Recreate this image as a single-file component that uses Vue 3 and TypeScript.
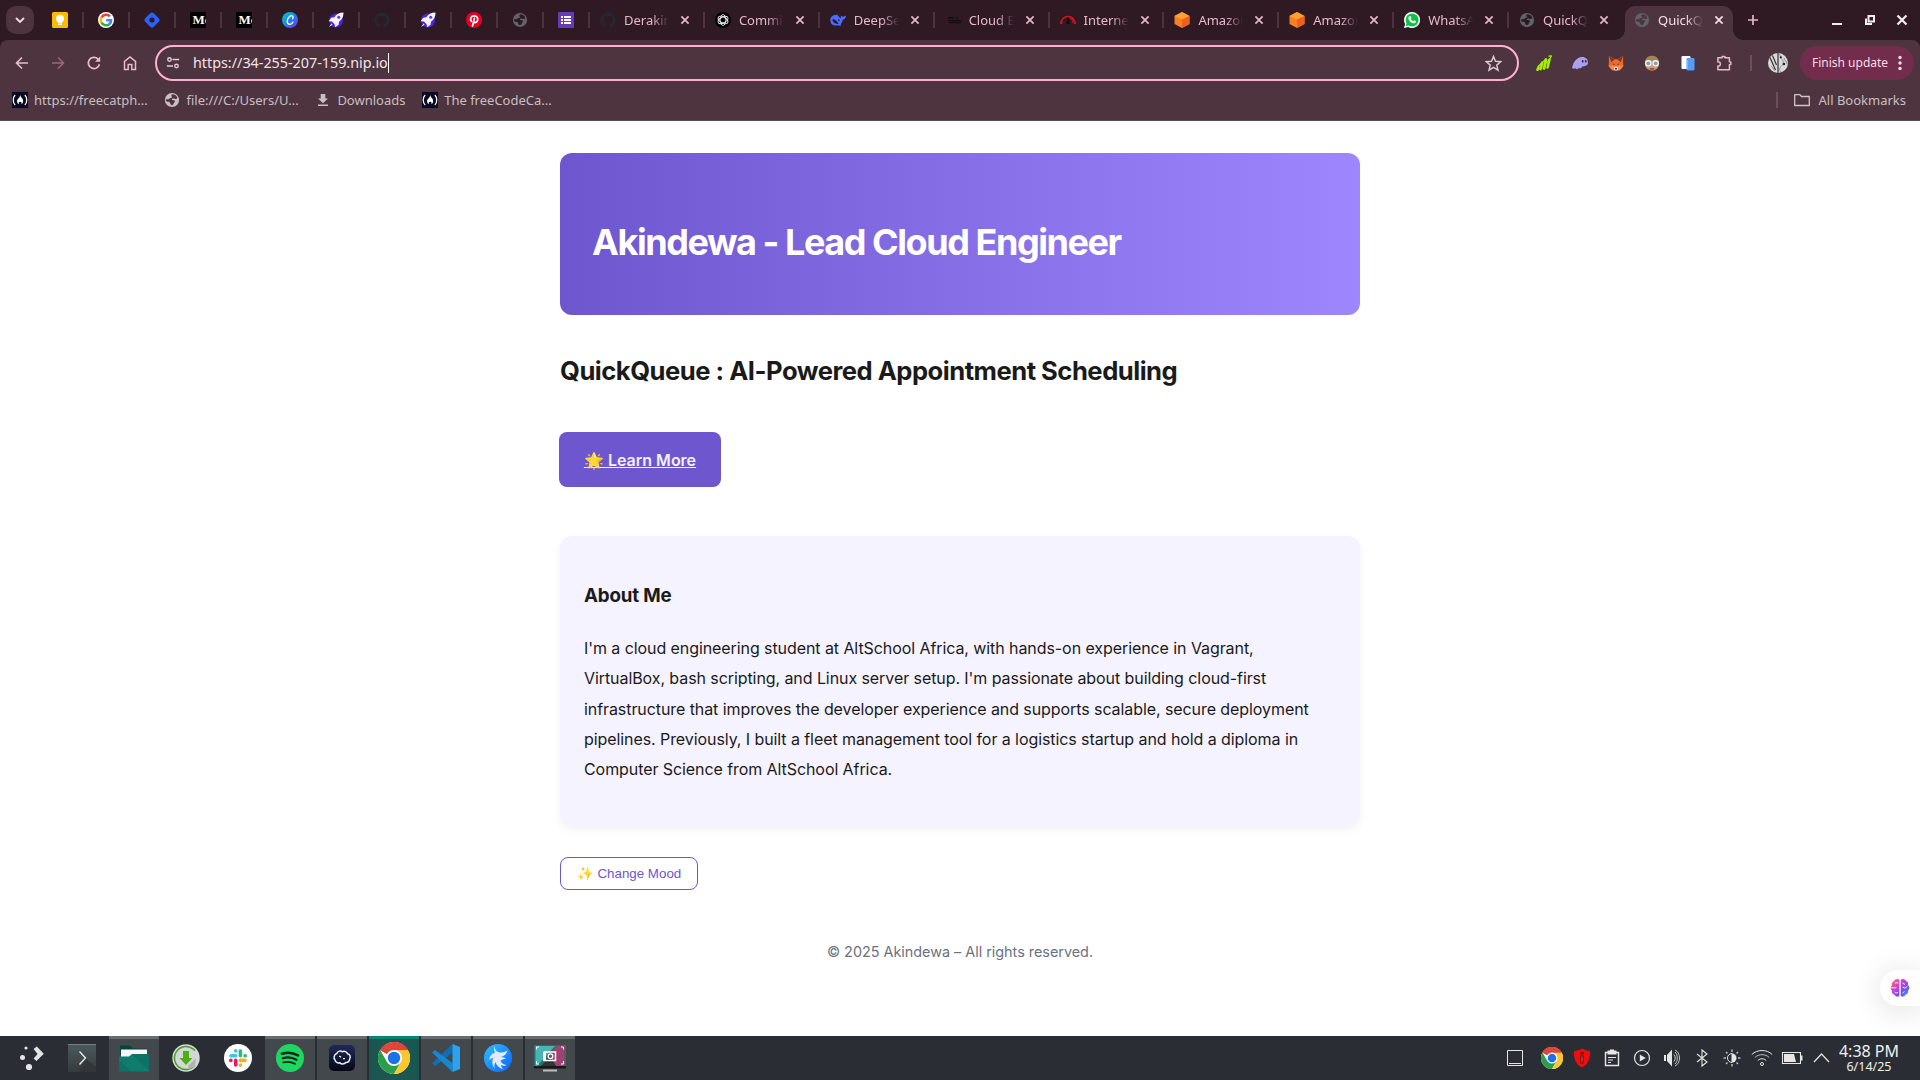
<script setup lang="ts">
interface Tab {
  icon: string
  title: string
}

interface Task {
  icon: string
  name: string
  size: number
  state: '' | 'open' | 'active'
}

const chromeLogo =
  '<circle cx="24" cy="24" r="24" fill="#fff"/><path d="M24 24 3.2 12A24 24 0 0 1 44.8 12z" fill="#db4437"/><path d="M3.2 12A24 24 0 0 0 24 48L34.4 30 24 24 13.6 30z" fill="#2b9e4b"/><path d="M44.8 12H24L34.4 30 24 48A24 24 0 0 0 44.8 12z" fill="#fcc62c"/><path d="M3.2 12A24 24 0 0 1 44.8 12H24A12 12 0 0 0 13.6 18z" fill="#e0443a"/><circle cx="24" cy="24" r="12" fill="#fff"/><circle cx="24" cy="24" r="9.3" fill="#1a73e8"/>'

const globe =
  '<circle cx="8" cy="8" r="7.1" fill="currentColor"/><path d="M8.6 2.2c-1.4.4-1.5 1.4-.9 2.2.6.9-.2 1.6-1.3 1.7-.9.1-.9 1.1-1.8 1.2-.9 0-2.3-.2-2.8.4.1 1.3.9 2 2.2 2.1 1.4 0 2 .5 2.2 1.6.2 1 1 .8 1.1 1.8 1.7-.1 2.4-1 2.5-2 .2-1 1.4-1 1.2-2.2C10.600 7.900 9 7.900 8 7.900c-.4-.9.2-1.300.9-1.400C9.900 6.300 10.900 7 12 6.900c.9-.1 1.500-.9 1-2C12 3.300 10.500 2.300 8.600 2.200z" fill="var(--hole)"/>'

const rocket =
  '<circle cx="8" cy="8.500" r="7" fill="#4b25d8"/><path d="M15.500.5C11 .6 8.300 2.300 6.300 5.300L3.200 5.700.8 9.200l3.100.4 2.700 2.600.5 3 3.500-2.500.4-3C14 7.600 15.600 5 15.500.5z" fill="#f4f3fb"/><circle cx="10.700" cy="5.200" r="1.500" fill="#5a3be0"/><path d="M3.500 11.500 1 15l3.500-2.300z" fill="#e9e6fb"/>'

const github =
  '<path d="M8 .4a7.700 7.700 0 0 0-2.430 15c.38.070.53-.160.53-.360v-1.400c-2.150.460-2.600-.930-2.600-.930-.350-.890-.860-1.130-.860-1.130-.700-.480.050-.470.050-.470.780.060 1.190.800 1.190.800.690 1.190 1.810.840 2.250.640.070-.500.270-.840.490-1.030-1.710-.200-3.500-.860-3.500-3.800 0-.840.300-1.530.790-2.070-.080-.190-.340-.980.080-2.040 0 0 .640-.210 2.110.790a7.300 7.300 0 0 1 3.840 0c1.470-1 2.110-.790 2.110-.790.420 1.060.160 1.850.080 2.040.490.540.790 1.230.790 2.070 0 2.960-1.800 3.600-3.510 3.800.280.240.520.700.520 1.420v2.100c0 .200.140.440.530.360A7.700 7.700 0 0 0 8 .4z" fill="#24292e"/>'

const medium =
  '<rect width="16" height="16" rx="1" fill="#000"/><text x="2.500" y="12" font-family="Liberation Serif, serif" font-weight="700" font-size="13" fill="#fff">Mc</text>'

const cube =
  '<path d="M8 0 15.500 4v8L8 16 .5 12V4z" fill="#f58220"/><path d="M8 0 15.500 4 8 7.600.5 4z" fill="#ffa02f"/><path d="M15.500 4v8L8 16V7.600z" fill="#ee6020"/>'

const fcc =
  '<rect width="16" height="16" fill="#0a0a23"/><path d="M3.200 3C.6 5.300.6 10.700 3.200 13M12.800 3c2.600 2.300 2.600 7.700 0 10" fill="none" stroke="#fff" stroke-width="1.200"/><path d="M8.100 3c.5 2.500 3.100 3.300 3 6.200 0 1.500-.8 2.600-1.900 3.100.6-1.100.5-2-.5-2.900-.7.900-1.300.8-1.400.1-.7.900-.7 1.900 0 2.800-1.500-.6-2.400-1.900-2.200-3.500C5.300 6.800 8 6 8.100 3z" fill="#fff"/>'

const icons: Record<string, string> = {
  keep: '<rect width="16" height="16" rx="1.500" fill="#fbbc04"/><circle cx="8" cy="6.700" r="3.900" fill="#fff"/><path d="M6 9h4v2H6zM6 11.600h4v1.400H6z" fill="#fff"/>',
  google:
    '<circle cx="8" cy="8" r="8" fill="#fff"/><g fill="none" stroke-width="2.500"><path d="M11.900 4.300A5.200 5.200 0 0 0 3.500 5.400" stroke="#ea4335"/><path d="M3.500 5.300a5.200 5.200 0 0 0 0 5.400" stroke="#fbbc05"/><path d="M3.500 10.600a5.200 5.200 0 0 0 8 1.400" stroke="#34a853"/><path d="M11.500 12A5 5 0 0 0 13.100 8.200H8.200" stroke="#4285f4"/></g>',
  hash: '<rect x="2" y="2" width="12" height="12" rx="2.500" transform="rotate(45 8 8)" fill="#2962ff"/><circle cx="8" cy="8" r="2.600" fill="#2f1a24"/>',
  medium,
  canva:
    '<defs><linearGradient id="cv" x1="0" y1="0" x2="1" y2="1"><stop offset=".1" stop-color="#00c4cc"/><stop offset=".55" stop-color="#2b7be4"/><stop offset="1" stop-color="#7d2ae8"/></linearGradient></defs><circle cx="8" cy="8" r="8" fill="url(#cv)"/><path d="M10.700 6.600c.7-1 .5-2.900-1.100-2.900-2.300 0-4.300 3-4.300 5.500 0 2 1 3.100 2.500 3.100 1.400 0 2.500-.9 3.100-2.100" fill="none" stroke="#fff" stroke-width="1.300" stroke-linecap="round"/>',
  rocket,
  github,
  pinterest:
    '<circle cx="8" cy="8" r="8" fill="#e60023"/><path d="M5.400 9.300C3.600 7 5 3.900 8.200 3.900c2.700 0 4 2.200 3.400 4.300-.6 2.400-3.100 3-4 1.500M8.400 6.300 6.500 14" fill="none" stroke="#fff" stroke-width="1.700" stroke-linecap="round"/>',
  globe,
  forms:
    '<rect width="16" height="16" rx="1" fill="#673ab7"/><path d="M3 4h2v2H3zM3 7h2v2H3zM3 10h2v2H3zM6 4h7v2H6zM6 7h7v2H6zM6 10h7v2H6z" fill="#fff"/>',
  gpt: '<circle cx="8" cy="8" r="8" fill="#000"/><g fill="none" stroke="#e8e8e8" stroke-width=".9"><ellipse cx="8" cy="8" rx="2.900" ry="5.400"/><ellipse cx="8" cy="8" rx="2.900" ry="5.400" transform="rotate(60 8 8)"/><ellipse cx="8" cy="8" rx="2.900" ry="5.400" transform="rotate(120 8 8)"/></g>',
  deepseek:
    '<path d="M.3 8.500C.2 5.500 2.500 3 5.500 3c1 0 1.300-.5 2-.5-.2 1.100 1.600 2 3 3.700.6-.5.400-1.700.3-2.700 1 .8 1.500 1.300 2 1.200 1.300-.1 1.800-1 3-.9.300 2-1 3.700-3 4-.2 1.800-.9 3.300-2.300 4.600.6.400 1.100.5 1 .9-1 .5-2.600.4-3.600-.1C4 14.500.5 12.300.3 8.500z" fill="#4d6bfe"/><path d="M2.500 7.300C5 7 6.900 9.200 8.600 11.700 5.700 12.500 2.500 10.600 2.500 7.300zM8 7.300c1.100-.2 2 .7 1.900 1.900L8 8.400z" fill="#2f1a24"/>',
  cloudE:
    '<path d="M3 5h6v1.600H3zM3 8h13v1.300H3zM4 10.200h12v1H4zM10 5.400h4v1h-4z" fill="#120a0e"/>',
  speed:
    '<g fill="none" stroke="#d8121f"><path d="M1 11.500A7 7 0 0 1 15 11.500" stroke-width="1.500"/><path d="M8 5.500a6 6 0 0 1 5 5.500M9.500 4a8 8 0 0 1 4 5" stroke-width="1"/></g><path d="M7 5h2l.8 7H6.700z" fill="#160a0e"/><path d="M0 9.500h2.500V12H0zM13.500 9.500H16V12h-2.500z" fill="#c5101c"/>',
  cube,
  whatsapp:
    '<path d="M8 0a8 8 0 1 1-3.800 15L0 16l1.100-4A8 8 0 0 1 8 0z" fill="#fff"/><circle cx="8.100" cy="7.900" r="6.500" fill="#0dc143"/><path d="m1.700 14.300 1-3.700 2.700 2.700z" fill="#0dc143"/><path d="M5.500 4.200h1.200l.8 1.900-.7 1c.6 1.100 1.300 1.700 2.400 2.200l1-1 1.800 1c-.1 1.500-1.200 2.200-2.400 2C6.800 11 4.700 8.600 4.400 6.300c0-1 .4-1.700 1.100-2.100z" fill="#fff"/>',
  fcc,
  download: '<path d="M5.700 2h4.600v4.500H13L8 11.300 3 6.500h2.700zM3 12.500h10V14H3z" fill="#c9bfc3"/>',
  close: '<path d="m4.400 4.400 7.200 7.200M11.600 4.400l-7.200 7.200" stroke="currentColor" stroke-width="1.700"/>',
  fox: '<path d="M.8 1 6.500 4.200h3L15.200 1l-.2 6 .5 4-3.600 4.500H4.100L.5 11 1 7z" fill="#ee6a2c"/><path d="M.8 1 6.300 4.500 3.500 7.200zM15.200 1 9.700 4.500l2.800 2.700z" fill="#7a3420"/><path d="M.8 11.500 5 10l1.400 2.500L5 15zM15.200 11.500 11 10l-1.400 2.500L11 15z" fill="#ff8a4a"/><path d="M4.500 8.700 6.500 9 6 10zM11.500 8.700 9.500 9l.5 1z" fill="#2a2d40"/><path d="M6.300 11.800h3.400l.5 2.400-1 1.200H6.800l-1-1.200z" fill="#d7dfe8"/><path d="M7 13h2v1.500H7z" fill="#343842"/>',
  phantom:
    '<path d="M.2 12.500C1.300 7 4.800 2.600 9.800 2.100c4-.3 6.300 2.600 6.200 5.500 0 2.200-1.300 3.500-3 3.200-1 .9-1.900.6-2.300.1-.9 1.600-2.400 2.900-3.900 2.100-1.300 1.600-3.200 1.400-3.500 0-1.100 1.200-2.900 1-3.100-.5z" fill="#ab9ff2"/><ellipse cx="10.700" cy="6.200" rx=".9" ry="1.500" fill="#4e343e"/><ellipse cx="13.800" cy="6.200" rx=".9" ry="1.500" fill="#4e343e"/>',
  growth:
    '<g stroke="#a3f000" stroke-linecap="round"><path d="m1.500 14.800 1-2.300" stroke-width="2.600"/><path d="m4.500 14 1.600-6" stroke-width="2.800"/><path d="m8 13.500 2-9" stroke-width="2.800"/><path d="m11.500 12.500 2-8" stroke-width="2.600"/><path d="M2 11.500 9 5l2 3 4.500-7M13 1.200l2.500-.4" stroke-width="1.200" fill="none"/></g>',
  face: '<circle cx="8" cy="8.500" r="7.200" fill="#d79a79"/><path d="M1 7C1.500 2.800 4.500.8 8 .8s6.500 2 7 6.200C12 5 5 4.800 1 7z" fill="#a08456"/><circle cx="4.300" cy="8.300" r="3.200" fill="#eef4f5"/><circle cx="11.700" cy="8.300" r="3.200" fill="#eef4f5"/><circle cx="4.300" cy="8.300" r="1.900" fill="#6fa9bb"/><circle cx="11.700" cy="8.300" r="1.900" fill="#6fa9bb"/><path d="M5.500 13.200h5l-1 1.600h-3z" fill="#814633"/>',
  pages:
    '<rect x="1.500" y="1" width="9" height="13" rx="1.200" fill="#fff"/><rect x="6.500" y="3" width="8" height="12.500" rx="1.200" fill="#559dfa"/><path d="M7.500 5v9" stroke="#78b4ff" stroke-width="1"/>',
  puzzle:
    '<path d="M1.900 2.700h4.200V1.400h2.800v1.300h4.500v4l1.400.4v2.300l-1.400.4v4.900H1.900v-3.700h1.300c1.500-.2 1.500-3.900 0-4.100H1.900z" fill="none" stroke="#e6bccb" stroke-width="1.500" stroke-linejoin="round"/>',
  star: '<path d="m8 1.400 1.900 4.500 4.900.4-3.700 3.200 1.100 4.800L8 11.700l-4.200 2.600 1.100-4.800L1.200 6.300l4.900-.4z" fill="none" stroke="#dcc8cf" stroke-width="1.400"/>',
  avatar:
    '<circle cx="10" cy="10" r="10" fill="#d9d9d9"/><path d="M2 4.500 7.500 17M4.500 2.500 8.500 12M10 0v20" stroke="#333" stroke-width="1.200"/><path d="M11 1.500c2.500 1 1 4 3 5s1.500 5-1 7-1 4-.5 5.500M16 5c.5 3 3 3 3 6" stroke="#8e8e8e" fill="none"/><circle cx="12.800" cy="4.300" r="1.100" fill="#222"/><circle cx="16" cy="11" r="1.200" fill="#222"/><path d="M3 13c1 1.500 3 3 4 5" stroke="#999"/>',
  folder: '<path d="M.7 2.700h5.200l1.500 1.800h7.900v9H.7z" fill="none" stroke="#d3c4c9" stroke-width="1.300" stroke-linejoin="round"/>',
  back: '<path d="M14 8H3M8 2.500 2.500 8 8 13.500" fill="none" stroke="#e6bccb" stroke-width="1.700"/>',
  forward: '<path d="M2 8h11M8 2.500 13.500 8 8 13.500" fill="none" stroke="#8e6c79" stroke-width="1.700"/>',
  reload:
    '<path d="M13.400 9.200A5.600 5.600 0 1 1 12 4.100l1.300 1.400" fill="none" stroke="#e6bccb" stroke-width="1.700"/><path d="M14.200 1.500v5.200H9z" fill="#e6bccb"/>',
  home: '<path d="M2.500 6.300 8 1.900l5.500 4.400v8.200h-3.700V9.400H6.200v5.100H2.500z" fill="none" stroke="#e6bccb" stroke-width="1.500"/>',
  tune: '<g fill="none" stroke="#e2ced5" stroke-width="1.600"><circle cx="4" cy="4" r="2"/><path d="M7.500 4H15M1 11.500h7"/><circle cx="12" cy="11.500" r="2"/></g>',
}

const taskIcons: Record<string, string> = {
  launcher:
    '<g fill="#e4e5e6" transform="translate(3 0)"><circle cx="7" cy="4" r="1.600"/><circle cx="3.500" cy="13.500" r="2.500"/><circle cx="10" cy="23" r="3.100"/><path d="m14.600 5 3.200-2.500 7 7.300-7.300 7.200-2.900-2.600 4-4.500z"/></g>',
  konsole:
    '<defs><linearGradient id="kn" x1="0" y1="0" x2="0" y2="1"><stop offset="0" stop-color="#4c5a5b"/><stop offset="1" stop-color="#353a3d"/></linearGradient></defs><path d="M0 0h28v28H0z" fill="url(#kn)"/><path d="M0 .5h28" stroke="#73807f"/><path d="m17 14 11 9v5H11z" fill="#2f3336" opacity=".7"/><path d="m11.500 7.500 6 6.500-6 6.500" fill="none" stroke="#e6e8e8" stroke-width="1.400"/>',
  files:
    '<path d="M1 1.500h10l3 3h14V11H1z" fill="#00463f"/><path d="M2 5.500h26v14H2z" fill="#f7f7f7"/><path d="M0 12.500h10l3-2.500h17v17.500H0z" fill="#0f7c6d"/><path d="M0 16 12 27.500H0zM13 10h17v17z" fill="#0a6a5e" opacity=".55"/>',
  installer:
    '<circle cx="14" cy="14" r="13.700" fill="#d4d7d8"/><circle cx="14" cy="14" r="11.500" fill="none" stroke="#43a51e" stroke-width="1.500" stroke-dasharray="56 17" transform="rotate(40 14 14)"/><path d="m16 22 8-8-1 9-6 2z" fill="#b0b4b5"/><path d="M11 7h6v7h3.500L14 21l-6.500-7H11z" fill="#4caf14"/>',
  slack:
    '<circle cx="14" cy="14" r="14" fill="#fff"/><g stroke-width="3.600" stroke-linecap="round"><path d="M11.700 6.800v.1M7 11.700h4.700" stroke="#36c5f0"/><path d="M16.400 7v4.700M21.200 11.700h-.1" stroke="#2eb67d"/><path d="M16.400 16.400H21M16.400 21.200v-.1" stroke="#ecb22e"/><path d="M11.700 16.400V21M6.800 16.400h.1" stroke="#e01e5a"/></g>',
  spotify:
    '<circle cx="14" cy="14" r="14" fill="#1ed760"/><g fill="none" stroke="#10251b" stroke-linecap="round"><path d="M6 9.700c5-1.500 11.500-1 16 1.700" stroke-width="2.600"/><path d="M6.700 14.200c4.500-1.300 9.700-.8 13.700 1.600" stroke-width="2.200"/><path d="M7.300 18.400c4-1 8-.6 11.700 1.400" stroke-width="1.800"/></g>',
  termius:
    '<defs><linearGradient id="tm" x1="0" y1="0" x2="0" y2="1"><stop offset="0" stop-color="#1e2a5c"/><stop offset="1" stop-color="#060814"/></linearGradient></defs><rect x="1" y="1" width="26" height="26" rx="5" fill="url(#tm)"/><path d="M9 9.300c.8-2.300 3.600-3 5.200-1.600 2.200-1 4.800 0 5.300 2.100 2.300.3 3.500 3 2.200 5-.1 2.400-1.700 4-3.900 3.700-1.400 1.900-4.600 2-6 .2-2.200.7-4.500-.6-4.700-2.700-1.900-1.700-1.100-5.600 1.900-6.700z" fill="none" stroke="#eceef4" stroke-width="1.500"/><path d="m11.300 12 1.800 1.300M15 14.600h2" stroke="#fff" stroke-width="1.200"/>',
  chrome: chromeLogo,
  vscode:
    '<path d="M20.500 0v9L3 22l-3-2.500z" fill="#0f6db5"/><path d="M20.500 28v-9L3 6 0 8.500z" fill="#1687d0"/><path d="M20.500 0 28 3v22l-7.500 3z" fill="#2aa4f0"/>',
  bird: '<defs><linearGradient id="bd" x1="0" y1="0" x2="1" y2="1"><stop offset="0" stop-color="#2fc0ff"/><stop offset="1" stop-color="#0b63ff"/></linearGradient></defs><circle cx="14" cy="14" r="14" fill="url(#bd)"/><path d="M10.500 2c.5 4 2 6 5.500 6.500 3 .2 5.500-.8 7.500-2-1 3.500-3 5.500-6.500 6.500 2 .2 3 .6 5 1.300-3 1-4.500 1.200-5.500 2.700 1 2.300 3.500 3.500 6 4-2 1.200-4 1-5.500 0 0 1.500 1 3 2.500 4.500C15 24 12.500 21.500 11.500 18c-1.300 2-1.300 4-1 6.500-2.500-3.500-3-7.500-1-11-1.500.5-3 1.200-4.500 2.500C5.500 12 8 9.500 11 8.800 10 6.500 9.800 4.500 10.500 2z" fill="#e3e9f2"/>',
  spectacle:
    '<path d="M0 1h32v22H0z" fill="#2c6f70"/><path d="M1.500 2H21L3 22H1.500z" fill="#49b5b1"/><path d="M30.500 2v20H20L14 12 23 2z" fill="#a0426f"/><path d="M7 22 16 12l6 10z" fill="#303436"/><path d="M0 22h32v2.500H0z" fill="#17191a"/><path d="M9 25.500h14v2H9z" fill="#b9bdbd"/><rect x="10.500" y="8" width="11" height="8.500" fill="none" stroke="#fff" stroke-width="1.500"/><path d="M9 8h3v9H9z" fill="#fff"/><circle cx="16.500" cy="12.200" r="2.300" fill="none" stroke="#fff" stroke-width="1.300"/><path d="M2.500 5.500V3H5M27 3h2.500v2.500M2.500 17v3H5M27 20h2.500v-3" stroke="#fff" fill="none"/>',
}

const trayIcons: string[] = [
  '<path d="M3.500 3.500h15v15h-15zM5 16.500h12" fill="none" stroke="#e6e6e6"/>',
  `<svg width="22" height="22" viewBox="0 0 48 48">${chromeLogo}</svg>`,
  '<path d="M11 1.500c2 1.600 5 2.500 8 2.500C19.500 11 17 18 11 20.500 5 18 2.500 11 3 4c3 0 6-.900 8-2.500z" fill="#f20d0d"/><path d="M9.500 5h3v2.500h-3zM9.300 8.500h3.200v8H9.300z" fill="#6b0a0a"/><path d="M11 9.500v6" stroke="#f55"/>',
  '<path d="M4.500 5.500h13v13h-13z" fill="none" stroke="#e6e6e6" stroke-width="1.400"/><path d="M6.500 3.500H9V2.500h4v1h2.500v4h-9z" fill="#e6e6e6"/><path d="M7 10.500h8M7 13h5M7 15.500h3" stroke="#e6e6e6"/>',
  '<circle cx="11" cy="11" r="7.500" fill="none" stroke="#e6e6e6" stroke-width="1.200"/><path d="m8.800 7.500 6 3.500-6 3.500z" fill="#e6e6e6"/>',
  '<path d="M3 8h2v6H3zM6 8l5-5.500v17L6 14z" fill="#e6e6e6"/><path d="M13 7.500c1.600 1.800 1.600 5.200 0 7M14 5c3 2.500 3 9.500 0 12M14 3c6 2.500 6 13.500 0 16" fill="none" stroke="#c4c5c6"/>',
  '<path d="m6 7 10 8-5 4V3l5 4-10 8" fill="none" stroke="#e6e6e6" stroke-width="1.100"/>',
  '<path d="M11 6.500a4.500 4.500 0 0 0 0 9z" fill="none" stroke="#e6e6e6"/><path d="M11 6.500a4.500 4.500 0 0 1 0 9z" fill="#e6e6e6"/><path d="M11 2.500v2.500M11 17v2.500M2.500 11H5M17 11h2.500M5 5l1.500 1.500M15.500 15.500 17 17M5 17l1.500-1.500M15.500 6.500 17 5" stroke="#b5b7b9" stroke-width="1.500"/>',
  '<g fill="none" stroke="#e6e6e6"><path d="M.8 7.500c5.500-5.300 15-5.300 20.400 0"/><path d="M3.800 10.500c4-3.800 10.500-3.800 14.400 0" stroke="#bcbec0"/><path d="M6.800 13.500c2.500-2.300 6-2.300 8.400 0"/><circle cx="11" cy="17" r="1.500"/></g>',
  '<path d="M1.500 5.500h18v11h-18z" fill="none" stroke="#e6e6e6" stroke-width="1.100"/><path d="M20 8.500h1.500v5H20z" fill="#e6e6e6"/><path d="M3 7h10l2 8H3z" fill="#e6e6e6"/>',
  '<path d="m3 15 7.500-8 7.500 8" fill="none" stroke="#e6e6e6" stroke-width="1.200"/>',
]

const pinned: string[] = [
  'keep', 'google', 'hash', 'medium', 'medium', 'canva', 'rocket', 'github',
  'rocket', 'pinterest', 'globe', 'forms',
]

const tabs: Tab[] = [
  { icon: 'github', title: 'Derakings' },
  { icon: 'gpt', title: 'Commit message' },
  { icon: 'deepseek', title: 'DeepSeek' },
  { icon: 'cloudE', title: 'Cloud Engineering' },
  { icon: 'speed', title: 'Internet speed' },
  { icon: 'cube', title: 'Amazon' },
  { icon: 'cube', title: 'Amazon' },
  { icon: 'whatsapp', title: 'WhatsApp' },
  { icon: 'globe', title: 'QuickQueue' },
]

const bookmarks: Tab[] = [
  { icon: 'fcc', title: 'https://freecatph...' },
  { icon: 'globe', title: 'file:///C:/Users/U...' },
  { icon: 'download', title: 'Downloads' },
  { icon: 'fcc', title: 'The freeCodeCa...' },
]

const extensions: string[] = ['growth', 'phantom', 'fox', 'face', 'pages', 'puzzle']

const tasks: Task[] = [
  { icon: 'launcher', name: 'Launcher', size: 28, state: '' },
  { icon: 'konsole', name: 'Konsole', size: 28, state: '' },
  { icon: 'files', name: 'Files', size: 30, state: 'open' },
  { icon: 'installer', name: 'Downloads', size: 28, state: '' },
  { icon: 'slack', name: 'Slack', size: 28, state: '' },
  { icon: 'spotify', name: 'Spotify', size: 28, state: 'open' },
  { icon: 'termius', name: 'Termius', size: 28, state: 'open' },
  { icon: 'chrome', name: 'Chrome', size: 48, state: 'active' },
  { icon: 'vscode', name: 'Code', size: 28, state: 'open' },
  { icon: 'bird', name: 'Mail', size: 28, state: 'open' },
  { icon: 'spectacle', name: 'Spectacle', size: 32, state: 'open' },
]
</script>

<template>
  <div class="desktop">
    <div class="tabstrip">
      <button class="tab-search" aria-label="Search tabs">
        <svg width="12" height="12" viewBox="0 0 12 12"><path d="m2 4 4 4 4-4" fill="none" stroke="#f3dde5" stroke-width="1.800" /></svg>
      </button>
      <div v-for="(icon, i) in pinned" :key="i" class="pin">
        <svg class="ico" viewBox="0 0 16 16" v-html="icons[icon]"></svg>
      </div>
      <div v-for="(tab, i) in tabs" :key="'t' + i" class="tab" :class="{ last: i === tabs.length - 1 }">
        <svg class="ico" viewBox="0 0 16 16" v-html="icons[tab.icon]"></svg>
        <span class="tab-title">{{ tab.title }}</span>
        <svg class="ico x" viewBox="0 0 16 16" v-html="icons.close"></svg>
      </div>
      <div class="tab current">
        <svg class="ico" viewBox="0 0 16 16" v-html="icons.globe"></svg>
        <span class="tab-title">QuickQueue</span>
        <svg class="ico x" viewBox="0 0 16 16" v-html="icons.close"></svg>
      </div>
      <svg class="plus" width="12" height="12" viewBox="0 0 12 12"><path d="M6 1v10M1 6h10" stroke="#e6b5c8" stroke-width="1.700" /></svg>
      <div class="win-controls">
        <svg width="12" height="12" viewBox="0 0 12 12"><path d="M1 10h10" stroke="#f4eef0" stroke-width="2" /></svg>
        <svg width="12" height="12" viewBox="0 0 12 12"><path d="M4.500 2h5.500v5.500H4.500zM2 4.500V10h6" fill="none" stroke="#f4eef0" stroke-width="2" /></svg>
        <svg width="12" height="12" viewBox="0 0 12 12"><path d="m1.500 1.500 9 9M10.500 1.500l-9 9" stroke="#f4eef0" stroke-width="2.200" /></svg>
      </div>
    </div>

    <div class="chrome">
      <div class="toolbar">
        <div class="nav">
          <svg v-for="n in ['back', 'forward', 'reload', 'home']" :key="n" width="16" height="16" viewBox="0 0 16 16" v-html="icons[n]"></svg>
        </div>
        <div class="omnibox">
          <svg width="14" height="14" viewBox="0 0 16 16" v-html="icons.tune"></svg>
          <span class="url">https://34-255-207-159.nip.io</span>
          <span class="caret"></span>
          <svg class="star" width="17" height="17" viewBox="0 0 16 16" v-html="icons.star"></svg>
        </div>
        <div class="exts">
          <svg v-for="e in extensions" :key="e" class="ico" viewBox="0 0 16 16" v-html="icons[e]"></svg>
        </div>
        <span class="divider"></span>
        <svg class="avatar" width="20" height="20" viewBox="0 0 20 20" v-html="icons.avatar"></svg>
        <button class="update">
          Finish update
          <svg width="4" height="16" viewBox="0 0 4 16"><g fill="#ffd9e5"><circle cx="2" cy="2.500" r="1.700" /><circle cx="2" cy="8" r="1.700" /><circle cx="2" cy="13.500" r="1.700" /></g></svg>
        </button>
      </div>
      <div class="bookmarks">
        <div v-for="b in bookmarks" :key="b.title" class="bookmark">
          <svg class="ico" viewBox="0 0 16 16" v-html="icons[b.icon]"></svg>
          <span>{{ b.title }}</span>
        </div>
        <div class="bookmark all">
          <span class="divider"></span>
          <svg class="ico" viewBox="0 0 16 16" v-html="icons.folder"></svg>
          <span>All Bookmarks</span>
        </div>
      </div>
    </div>

    <main class="page">
      <div class="container">
        <header class="hero"><h1>Akindewa - Lead Cloud Engineer</h1></header>
        <h2>QuickQueue : AI-Powered Appointment Scheduling</h2>
        <a class="learn"><span>🌟 Learn More</span></a>
        <section class="card">
          <h3>About Me</h3>
          <p>
            I'm a cloud engineering student at AltSchool Africa, with hands-on experience in Vagrant,<br />
            VirtualBox, bash scripting, and Linux server setup. I'm passionate about building cloud-first<br />
            infrastructure that improves the developer experience and supports scalable, secure deployment<br />
            pipelines. Previously, I built a fleet management tool for a logistics startup and hold a diploma in<br />
            Computer Science from AltSchool Africa.
          </p>
        </section>
        <button class="mood">✨ Change Mood</button>
        <footer>© 2025 Akindewa – All rights reserved.</footer>
      </div>
      <div class="assistant">
        <svg width="20" height="20" viewBox="0 0 20 20">
          <defs>
            <linearGradient id="br" x1="0" y1="0" x2="1" y2="1">
              <stop offset="0" stop-color="#ff8a3d" />
              <stop offset=".35" stop-color="#d63fd6" />
              <stop offset=".65" stop-color="#7a4df0" />
              <stop offset="1" stop-color="#18b4ff" />
            </linearGradient>
          </defs>
          <path d="M9.300 1.500C7 .2 4.500 1.300 4 3 2 3.600 1.400 5.500 2 7 .3 8.500.2 11.200 1.800 12.600 1.500 15 3 16.500 4.500 16.800 5.500 19 8 19.300 9.300 18zM10.700 1.500C13 .2 15.500 1.300 16 3c2 .6 2.600 2.500 2 4 1.700 1.500 1.800 4.200.2 5.600.3 2.400-1.200 3.900-2.700 4.200-1 2.200-3.500 2.500-4.800 1.200z" fill="url(#br)" />
          <path d="M1 9.800h5.500M5 5.500c1-1.200 2.500-1 3.300 0M4.500 14c.8 1 2.500 1.300 3.500.3M12.500 5l2.500 1.500M12.500 9l2.500 1.200L17.500 8M12.500 15l2-1.500" fill="none" stroke="#fff" stroke-width=".9" />
        </svg>
      </div>
    </main>

    <div class="taskbar">
      <div class="tasks">
        <div v-for="t in tasks" :key="t.name" class="task" :class="t.state" :title="t.name">
          <svg
            :width="t.size === 48 ? 32 : t.size"
            :height="t.size === 48 ? 32 : 28"
            :viewBox="t.size === 48 ? '0 0 48 48' : '0 0 ' + t.size + ' 28'"
            v-html="taskIcons[t.icon]"
          ></svg>
        </div>
      </div>
      <div class="tray">
        <svg v-for="(icon, i) in trayIcons" :key="i" width="22" height="22" viewBox="0 0 22 22" v-html="icon"></svg>
        <div class="clock">
          <span class="time">4:38 PM</span>
          <span class="date">6/14/25</span>
        </div>
      </div>
    </div>
  </div>
</template>

<style>
body {
  margin: 0;
  overflow: hidden;
}
</style>

<style scoped>
.desktop {
  width: 1920px;
  height: 1080px;
  display: flex;
  flex-direction: column;
  overflow: hidden;
  font-family: 'Noto Sans', sans-serif;
  background: #2f1a24;
}

button {
  font: inherit;
  border: 0;
  padding: 0;
}

svg {
  display: block;
  flex: none;
}

.ico {
  width: 16px;
  height: 16px;
}

.tabstrip {
  height: 40px;
  flex: none;
  display: flex;
  align-items: center;
  background: #2f1a24;
  color: #5f6368;
  --hole: #2f1a24;
}

.tab-search {
  width: 28px;
  height: 28px;
  margin: 0 4px 0 6px;
  border-radius: 10px;
  background: #4e343e;
  display: flex;
  align-items: center;
  justify-content: center;
}

.pin,
.tab {
  box-sizing: border-box;
  height: 16px;
  flex: none;
  display: flex;
  align-items: center;
  border-right: 2px solid #4e343e;
}

.pin {
  width: 46px;
  padding-left: 14px;
}

.tab {
  width: 114.875px;
  padding-left: 10px;
}

.tab.last {
  width: 114px;
  border-right-color: transparent;
}

.tab-title {
  width: 45px;
  margin-left: 8px;
  overflow: hidden;
  white-space: nowrap;
  font-size: 13px;
  line-height: 20px;
  color: #e6b9ca;
  mask-image: linear-gradient(90deg, #000 62%, transparent);
}

.x {
  margin-left: 8px;
  color: #e6b9ca;
}

.tab.current {
  position: relative;
  align-self: flex-end;
  width: 108px;
  height: 34px;
  margin-left: 2px;
  padding: 0 0 6px 9px;
  border: 0;
  border-radius: 10px 10px 0 0;
  background: #4e343e;
  --hole: #4e343e;
}

.tab.current::before,
.tab.current::after {
  content: '';
  position: absolute;
  bottom: 0;
  width: 10px;
  height: 10px;
}

.tab.current::before {
  left: -10px;
  background: radial-gradient(circle at 0 0, transparent 9.500px, #4e343e 10px);
}

.tab.current::after {
  right: -10px;
  background: radial-gradient(circle at 100% 0, transparent 9.500px, #4e343e 10px);
}

.tab.current .tab-title,
.tab.current .x {
  color: #f6dfe7;
}

.plus {
  margin-left: 14px;
}

.win-controls {
  margin-left: auto;
  margin-right: 12px;
  display: flex;
  gap: 20.500px;
}

.chrome {
  height: 81px;
  flex: none;
  box-sizing: border-box;
  background: #4e343e;
  border-radius: 8px 8px 0 0;
  border-bottom: 1px solid #5c4a51;
}

.toolbar {
  height: 46px;
  display: flex;
  align-items: center;
}

.nav {
  display: flex;
  gap: 20px;
  padding-left: 14px;
}

.omnibox {
  box-sizing: border-box;
  width: 1364px;
  height: 36px;
  margin-left: 17px;
  border: 2px solid #ffb1cf;
  border-radius: 18px;
  display: flex;
  align-items: center;
  padding: 0 15px 0 9px;
}

.url {
  margin: -1px 0 0 13px;
  font-size: 14.330px;
  color: #f5e2e9;
}

.caret {
  width: 1px;
  height: 20px;
  background: #fff;
}

.star {
  margin-left: auto;
}

.exts {
  display: flex;
  gap: 20px;
  margin-left: 17px;
}

.divider {
  width: 2px;
  height: 16px;
  background: #6f4e5b;
}

.toolbar .divider {
  margin-left: 18px;
}

.avatar {
  margin-left: 16px;
}

.update {
  width: 114px;
  height: 34px;
  margin-left: 12px;
  padding-left: 12px;
  border-radius: 17px;
  background: #722d4d;
  color: #ffd9e5;
  font-size: 12px;
  line-height: 34px;
  display: flex;
  align-items: center;
  gap: 10px;
  white-space: nowrap;
}

.bookmarks {
  height: 28px;
  display: flex;
  align-items: center;
  padding: 0 14px 0 12px;
  gap: 16.700px;
  color: #c9bfc3;
  --hole: #4e343e;
  font-size: 13px;
}

.bookmark {
  display: flex;
  align-items: center;
  gap: 6px;
  line-height: 20px;
}

.all {
  margin-left: auto;
  gap: 8px;
}

.all .divider {
  margin-right: 8px;
}

.page {
  position: relative;
  flex: 1;
  background: #fff;
  overflow: hidden;
  font-family: Inter, sans-serif;
  color: #1a1a1a;
}

.container {
  width: 800px;
  margin: 0 auto;
  padding-top: 32px;
  display: flex;
  flex-direction: column;
  align-items: flex-start;
}

.hero {
  box-sizing: border-box;
  width: 800px;
  height: 162px;
  padding: 16px 32px 0;
  border-radius: 12px;
  display: flex;
  align-items: center;
  background: linear-gradient(90deg, #6e56cf, #9e86ff);
  color: #fff;
}

h1 {
  margin: 0;
  font-size: 36px;
  letter-spacing: -1.440px;
  line-height: 44px;
}

h2 {
  margin: 40px 0 0;
  font-size: 25.600px;
  letter-spacing: -0.490px;
  line-height: 32px;
}

.learn {
  box-sizing: border-box;
  width: 162px;
  height: 55px;
  margin: 45px 0 0 -1px;
  padding-top: 1px;
  border-radius: 8px;
  background: #6e56cf;
  display: flex;
  align-items: center;
  justify-content: center;
  color: #f3f0ff;
  font-weight: 600;
  font-size: 16px;
  white-space: nowrap;
}

.learn span {
  text-decoration: underline;
}

.card {
  box-sizing: border-box;
  width: 800px;
  height: 290px;
  margin-top: 49px;
  padding: 48px 24px 0;
  border-radius: 12px;
  background: #f5f3ff;
  box-shadow: 0 4px 8px rgba(0, 0, 0, 0.05);
}

h3 {
  margin: 0;
  font-size: 18.720px;
  letter-spacing: -0.150px;
  line-height: 24px;
}

p {
  margin: 25px 0 0;
  font-size: 16px;
  letter-spacing: -0.078px;
  line-height: 30.250px;
  white-space: nowrap;
}

.mood {
  box-sizing: border-box;
  width: 138px;
  height: 33px;
  margin-top: 31px;
  border: 1px solid #6e56cf;
  border-radius: 8px;
  background: #fff;
  color: #6e56cf;
  font-family: 'Liberation Sans', Arial, sans-serif;
  font-size: 13.333px;
}

footer {
  width: 100%;
  margin-top: 51px;
  text-align: center;
  font-size: 14.400px;
  letter-spacing: -0.010px;
  line-height: 22px;
  color: #6b7280;
}

.assistant {
  position: absolute;
  right: 0;
  top: 849px;
  box-sizing: border-box;
  width: 40px;
  height: 36px;
  padding: 8px 0 0 10px;
  border-radius: 18px 0 0 18px;
  background: #fff;
  box-shadow: 0 4px 32px rgba(0, 0, 0, 0.14);
}

.taskbar {
  height: 44px;
  flex: none;
  display: flex;
  justify-content: space-between;
  background: #2a2e34;
  color: #eff0f1;
}

.tasks {
  display: flex;
  gap: 2px;
  padding-left: 5px;
}

.task {
  box-sizing: border-box;
  width: 50px;
  height: 44px;
  border-top: 3px solid transparent;
  display: flex;
  align-items: center;
  justify-content: center;
}

.task svg {
  margin-top: -3px;
}

.open {
  background: #43484c;
  border-top-color: #666c6f;
}

.active {
  background: #1b5650;
  border-top-color: #0b8573;
}

.tray {
  display: flex;
  align-items: center;
  gap: 8px;
  padding-right: 21px;
}

.tray > svg:first-child {
  margin-right: 7px;
}

.clock {
  width: 60px;
  margin-left: -2px;
  display: flex;
  flex-direction: column;
  align-items: center;
  white-space: nowrap;
}

.time {
  font-size: 16px;
  line-height: 17px;
}

.date {
  font-size: 12.500px;
  line-height: 14px;
}
</style>
